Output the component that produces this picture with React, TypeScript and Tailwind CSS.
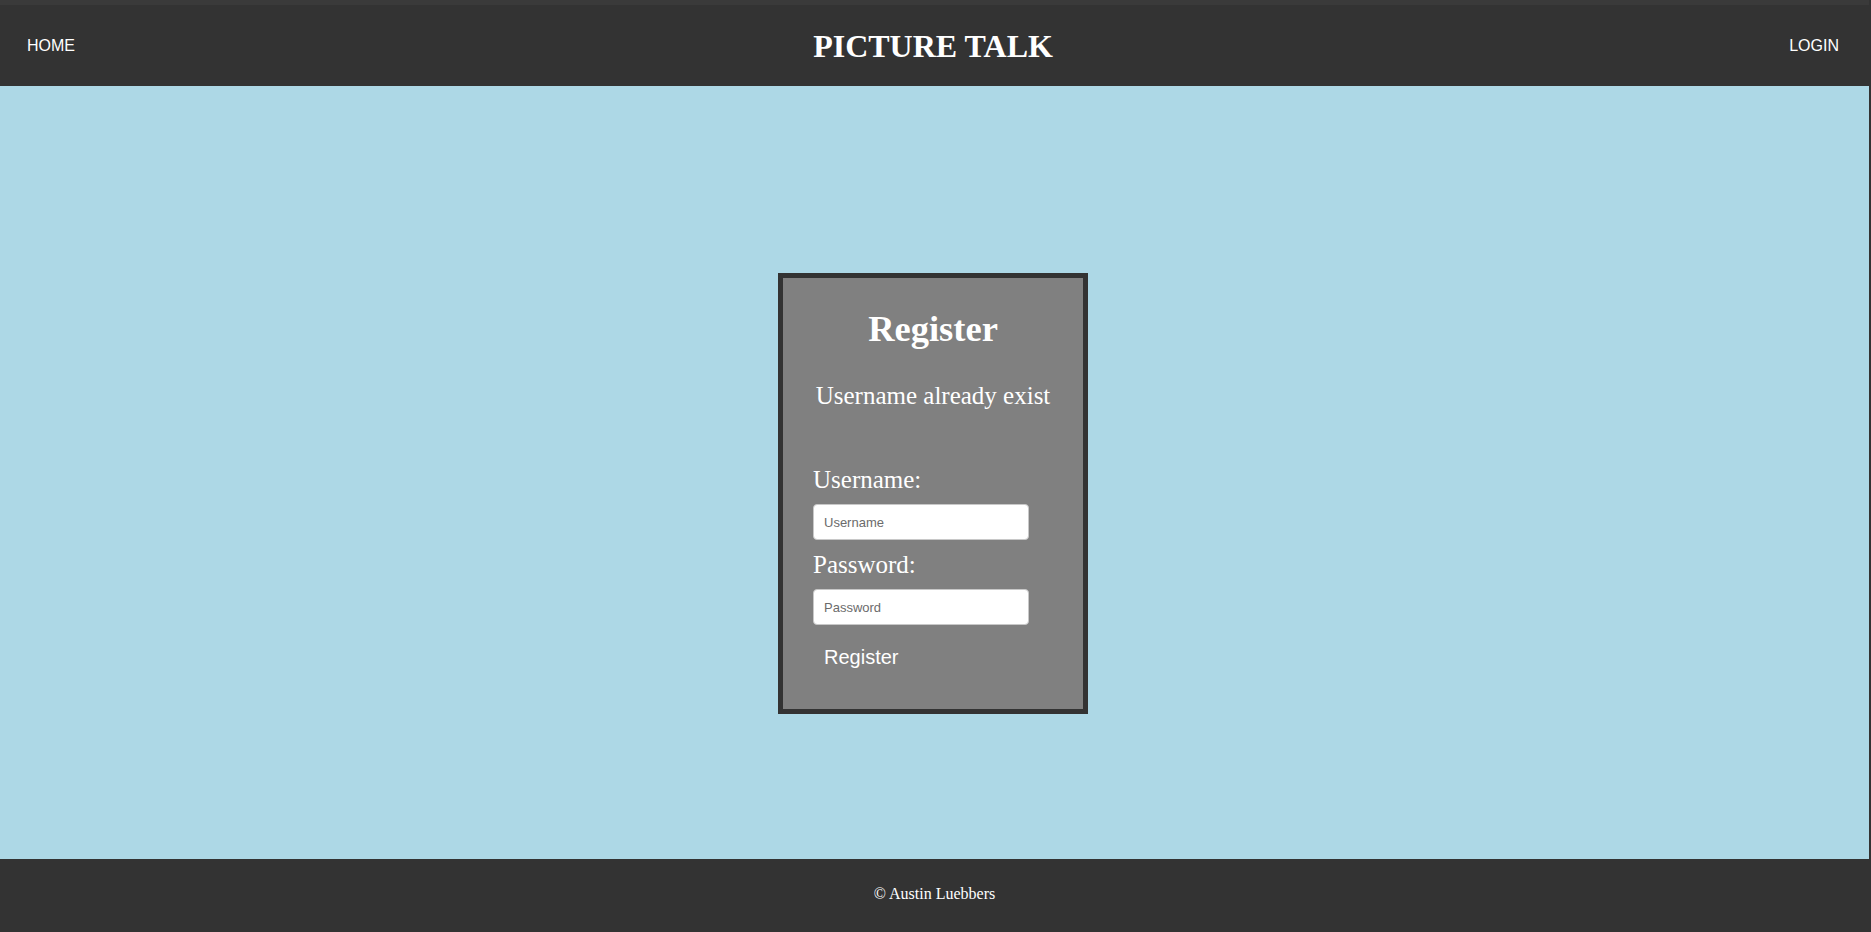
import React from "react";

export default function App() {
  return (
    <div className="h-screen w-full bg-[#333333] pr-[2px] flex flex-col overflow-hidden">
      <header className="h-[86px] shrink-0 bg-[#333333] border-t-[5px] border-[#3a3a3a] grid grid-cols-[1fr_auto_1fr] items-center pl-[27px] pr-[30px]">
        <a className="justify-self-start text-white text-[16px] leading-[18px] font-['Liberation_Sans',Arial,sans-serif]">HOME</a>
        <h1 className="text-white text-[32px] leading-[37px] font-bold font-['Liberation_Serif','Times_New_Roman',serif] mt-[1px]">
          PICTURE TALK
        </h1>
        <a className="justify-self-end text-white text-[16px] leading-[18px] font-['Liberation_Sans',Arial,sans-serif]">LOGIN</a>
      </header>

      <main className="flex-1 bg-[#add8e6] flex justify-center items-start pt-[187px]">
        <div className="w-[310px] mr-[3px] bg-[#808080] border-[5px] border-[#333333] pt-[31px] pb-[38px] px-[30px] flex flex-col font-['Liberation_Serif','Times_New_Roman',serif] text-white">
          <h2 className="text-center font-bold text-[36.5px] leading-[40px]">Register</h2>
          <p className="text-center text-[25px] leading-[30px] mt-[32px] whitespace-nowrap -mx-[10px]">Username already exist</p>
          <label className="text-[25px] leading-[30px] mt-[54px]">Username:</label>
          <input
            placeholder="Username"
            className="mt-[9px] h-[36px] w-[216px] bg-white rounded-[4px] border border-[#c8c8c8] px-[10px] text-[13px] font-['Liberation_Sans',Arial,sans-serif] text-black placeholder:text-[#6b6b6b] outline-none"
          />
          <label className="text-[25px] leading-[30px] mt-[10px]">Password:</label>
          <input
            type="password"
            placeholder="Password"
            className="mt-[9px] h-[36px] w-[216px] bg-white rounded-[4px] border border-[#c8c8c8] px-[10px] text-[13px] font-['Liberation_Sans',Arial,sans-serif] text-black placeholder:text-[#6b6b6b] outline-none"
          />
          <div className="mt-[20px]">
            <button className="bg-transparent text-white text-[20px] leading-[24px] px-[11px] font-['Liberation_Sans',Arial,sans-serif]">
              Register
            </button>
          </div>
        </div>
      </main>

      <footer className="h-[73px] shrink-0 bg-[#333333] pt-[26px] text-center">
        <p className="text-white text-[16px] leading-[18px] font-['Liberation_Serif','Times_New_Roman',serif]">© Austin Luebbers</p>
      </footer>
    </div>
  );
}
